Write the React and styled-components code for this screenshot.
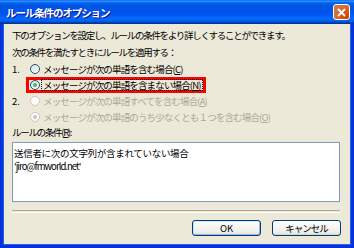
import React from "react";
import styled, { createGlobalStyle } from "styled-components";

const GlobalStyle = createGlobalStyle`
  html, body {
    margin: 0;
    padding: 0;
    background: #ffffff;
  }
  body {
    font-family: "Noto Sans CJK JP", "Liberation Sans", sans-serif;
  }
`;

const Window = styled.div`
  width: 354px;
  height: 248px;
  display: flex;
  flex-direction: column;
  box-sizing: border-box;
`;

const TitleBar = styled.div`
  height: 24px;
  flex: none;
  display: flex;
  align-items: center;
  justify-content: space-between;
  padding: 0 4px 0 6px;
  background: linear-gradient(
    to bottom,
    #0058ee 0%,
    #3593ff 4%,
    #288eff 6%,
    #127dff 8%,
    #036ffc 10%,
    #0262ee 14%,
    #0057e5 20%,
    #0054e3 24%,
    #0055eb 56%,
    #005bf5 66%,
    #026afe 76%,
    #0062ef 86%,
    #0052d6 92%,
    #0040ab 94%,
    #003092 100%
  );
`;

const Title = styled.span`
  color: #ffffff;
  font-weight: 700;
  font-size: 10.5px;
  letter-spacing: -1.1px;
  text-shadow: 1px 1px #0f1089;
`;

const CloseButton = styled.div`
  width: 17px;
  height: 16px;
  box-sizing: border-box;
  border: 1px solid #ffffff;
  border-radius: 3px;
  background: radial-gradient(circle at 90% 90%, #cc4600 0%, #dc6527 55%, #cd7546 70%),
    linear-gradient(#e97d5f, #d74a21);
  display: flex;
  align-items: center;
  justify-content: center;
`;

const Frame = styled.div`
  flex: 1;
  display: flex;
  flex-direction: column;
  background: #ece9d8;
  border: 3px solid #0831d9;
  border-top: none;
  box-shadow: inset 1px 0 #166aee, inset -1px 0 #166aee, inset 0 -1px #166aee;
  padding: 3px 11px 0 9px;
`;

const Line = styled.div`
  height: 16px;
  line-height: 16px;
  font-size: 9.5px;
  letter-spacing: -1.3px;
  color: #000000;
  white-space: nowrap;
  margin-top: ${(p) => p.$top || 0}px;
`;

const Options = styled.div`
  margin-top: 1px;
  display: flex;
  flex-direction: column;
`;

const OptionRow = styled.div`
  height: 16px;
  display: flex;
  align-items: center;
`;

const Num = styled.span`
  width: 14px;
  flex: none;
  font-size: 9.5px;
  color: #000000;
`;

const Option = styled.div`
  height: 16px;
  box-sizing: border-box;
  display: flex;
  align-items: center;
  gap: 2px;
  padding: 0 1px 0 1px;
  border: 3px solid ${(p) => (p.$highlight ? "#ff0000" : "transparent")};
`;

const Radio = styled.span`
  width: 10px;
  height: 10px;
  flex: none;
  box-sizing: border-box;
  border-radius: 50%;
  border: 1px solid ${(p) => (p.$disabled ? "#cac8bb" : "#1c5180")};
  background: ${(p) =>
    p.$disabled ? "#ffffff" : "linear-gradient(135deg, #dcdcd7, #ffffff)"};
  display: flex;
  align-items: center;
  justify-content: center;
  &::after {
    content: "";
    display: ${(p) => (p.$checked ? "block" : "none")};
    width: 4px;
    height: 4px;
    border-radius: 50%;
    background: ${(p) =>
      p.$disabled ? "#cac8bb" : "radial-gradient(circle at 35% 35%, #55d855, #21a121)"};
  }
`;

const Label = styled.span`
  font-size: 9.5px;
  letter-spacing: -0.85px;
  line-height: 10px;
  white-space: nowrap;
  color: ${(p) => (p.$disabled ? "#aca899" : "#000000")};
  outline: ${(p) => (p.$focused ? "1px dotted #000000" : "none")};
  padding: 0 1px;
  u {
    text-underline-offset: 1px;
  }
`;

const ConditionBox = styled.div`
  margin-top: 2px;
  height: 60px;
  box-sizing: border-box;
  border: 1px solid #7f9db9;
  background: #ffffff;
  padding: 4px 1px;
  font-size: 9.5px;
  line-height: 13px;
  color: #000000;
`;

const BoxLine = styled.div`
  letter-spacing: ${(p) => (p.$latin ? "-0.95px" : "-0.3px")};
  white-space: nowrap;
`;

const Separator = styled.div`
  margin-top: 8px;
  height: 1px;
  border-top: 1px solid #aca899;
  border-bottom: 1px solid #ffffff;
`;

const ButtonRow = styled.div`
  margin-top: 7px;
  display: flex;
  justify-content: flex-end;
  gap: 11px;
  margin-right: -1px;
`;

const Button = styled.button`
  width: 69px;
  height: 16px;
  padding: 0;
  box-sizing: border-box;
  border: 1px solid #003c74;
  border-radius: 3px;
  background: linear-gradient(180deg, #ffffff 0%, #f3f2ee 60%, #ecebe6 86%, #d6d0c5 100%);
  box-shadow: ${(p) =>
    p.$default ? "inset 1px 1px #cee7ff, inset -1px -1px #98b8ea" : "none"};
  font-family: inherit;
  font-size: 9.5px;
  letter-spacing: ${(p) => (p.$jp ? "-1px" : "0")};
  line-height: 14px;
  color: #000000;
`;

const options = [
  { num: "1.", text: "メッセージが次の単語を含む場合(", key: "C" },
  { text: "メッセージが次の単語を含まない場合(", key: "N", checked: true, highlight: true },
  { num: "2.", text: "メッセージが次の単語すべてを含む場合(", key: "A", disabled: true },
  { text: "メッセージが次の単語のうち少なくとも１つを含む場合(", key: "O", disabled: true, checked: true },
];

export default function App() {
  return (
    <>
      <GlobalStyle />
      <Window>
        <TitleBar>
          <Title>ルール条件のオプション</Title>
          <CloseButton>
            <svg width="9" height="9" viewBox="0 0 9 9">
              <path d="M1 1 L8 8 M8 1 L1 8" stroke="#ffffff" strokeWidth="1.8" />
            </svg>
          </CloseButton>
        </TitleBar>
        <Frame>
          <Line>下のオプションを設定し、ルールの条件をより詳しくすることができます。</Line>
          <Line $top={1}>次の条件を満たすときにルールを適用する：</Line>
          <Options>
            {options.map((o, i) => (
              <OptionRow key={i}>
                <Num>{o.num || ""}</Num>
                <Option $highlight={o.highlight}>
                  <Radio $checked={o.checked} $disabled={o.disabled} />
                  <Label $disabled={o.disabled} $focused={o.highlight}>
                    {o.text}
                    <u>{o.key}</u>)
                  </Label>
                </Option>
              </OptionRow>
            ))}
          </Options>
          <Line $top={-1}>
            ルールの条件(<u>R</u>):
          </Line>
          <ConditionBox>
            <BoxLine>送信者に次の文字列が含まれていない場合</BoxLine>
            <BoxLine $latin>'jiro@fmworld.net'</BoxLine>
          </ConditionBox>
          <Separator />
          <ButtonRow>
            <Button $default>OK</Button>
            <Button $jp>キャンセル</Button>
          </ButtonRow>
        </Frame>
      </Window>
    </>
  );
}
